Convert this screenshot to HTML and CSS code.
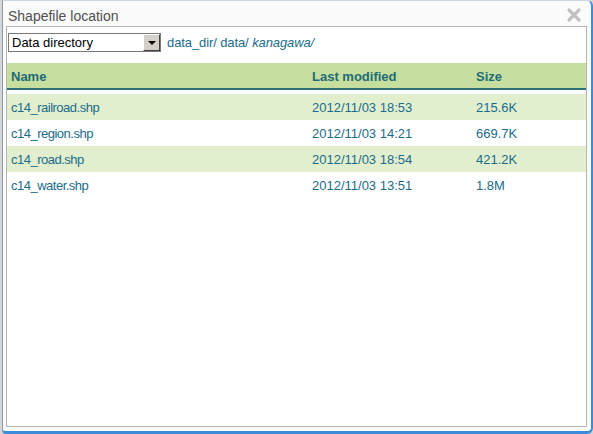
FILE: index.html
```html
<!DOCTYPE html>
<html>
<head>
<meta charset="utf-8">
<link rel="stylesheet" href="styles.css">
</head>
<body>
<div class="dialog">
  <div class="titlebar">
    <span class="title">Shapefile location</span>
    <svg class="close" width="16" height="16" viewBox="0 0 16 16">
      <path d="M3 3 L13 13 M13 3 L3 13" stroke="#c2c2c2" stroke-width="3.2" stroke-linecap="round"/>
    </svg>
  </div>
  <div class="panel">
    <div class="toolbar">
      <div class="select">
        <span class="select-text">Data directory</span>
        <span class="select-btn"><span class="tri"></span></span>
      </div>
      <div class="crumbs">data_dir/ data/ <em>kanagawa/</em></div>
    </div>
    <div class="table">
      <div class="row head">
        <span class="c-name">Name</span>
        <span class="c-date">Last modified</span>
        <span class="c-size">Size</span>
      </div>
      <div class="body">
        <div class="row odd"><span class="c-name">c14_railroad.shp</span><span class="c-date">2012/11/03 18:53</span><span class="c-size">215.6K</span></div>
        <div class="row"><span class="c-name">c14_region.shp</span><span class="c-date">2012/11/03 14:21</span><span class="c-size">669.7K</span></div>
        <div class="row odd"><span class="c-name">c14_road.shp</span><span class="c-date">2012/11/03 18:54</span><span class="c-size">421.2K</span></div>
        <div class="row"><span class="c-name">c14_water.shp</span><span class="c-date">2012/11/03 13:51</span><span class="c-size">1.8M</span></div>
      </div>
    </div>
  </div>
</div>
</body>
</html>
```
FILE: styles.css
```css
html, body {
  margin: 0;
  padding: 0;
  background: #d6d6d6;
}
body {
  width: 593px;
  height: 434px;
  overflow: hidden;
  font-family: "Liberation Sans", Arial, sans-serif;
  font-size: 13px;
}
.dialog {
  box-sizing: border-box;
  margin-left: 2px;
  width: 591px;
  height: 434px;
  background: #fbfbfb;
  border-style: solid;
  border-color: #3d8cd9;
  border-left-color: #8a9aab;
  border-top-color: #c9d6e3;
  border-width: 1px 2px 3px 1px;
  border-radius: 0 6px 6px 4px;
  display: flex;
  flex-direction: column;
}
.titlebar {
  height: 25px;
  display: flex;
  align-items: center;
  justify-content: space-between;
  padding: 0 9px 0 5px;
}
.title {
  color: #4f4f4f;
  font-size: 14px;
  padding-top: 4px;
}
.close {
  display: block;
  margin-top: 3px;
}
.panel {
  flex: 1;
  margin: 0 4px 4px 3px;
  border: 1px solid #b5b5b5;
  background: #fff;
  display: flex;
  flex-direction: column;
}
.toolbar {
  display: flex;
  align-items: center;
  padding: 6px 0 0 1px;
  height: 19px;
}
.select {
  box-sizing: border-box;
  width: 153px;
  height: 19px;
  border: 1px solid #7a7a7a;
  background: #fff;
  display: flex;
  align-items: center;
  justify-content: space-between;
  color: #000;
}
.select-text {
  padding-left: 3px;
}
.select-btn {
  box-sizing: border-box;
  width: 17px;
  height: 17px;
  background: #d4d0c8;
  border: 1px solid;
  border-color: #fff #404040 #404040 #fff;
  display: flex;
  align-items: center;
  justify-content: center;
}
.tri {
  width: 0;
  height: 0;
  border-left: 4px solid transparent;
  border-right: 4px solid transparent;
  border-top: 4px solid #000;
  margin-top: 1px;
}
.crumbs {
  margin-left: 6px;
  color: #1b6c8a;
  letter-spacing: -0.1px;
}
.crumbs em {
  font-style: italic;
}
.table {
  margin-top: 11px;
}
.row {
  display: flex;
  align-items: center;
  height: 26px;
  color: #1b6c8a;
}
.row.head {
  height: 27px;
  background: #c6df9e;
  border-bottom: 2px solid #2f7078;
  font-weight: bold;
  color: #1f6b78;
  padding-top: 1px;
  box-sizing: border-box;
}
.body {
  margin-top: 4px;
}
.row.odd {
  background: #e1efcf;
}
.c-name {
  width: 301px;
  padding-left: 4px;
}
.body .c-name {
  letter-spacing: -0.5px;
}
.c-date {
  width: 164px;
}
.c-size {
  flex: 1;
}
```
